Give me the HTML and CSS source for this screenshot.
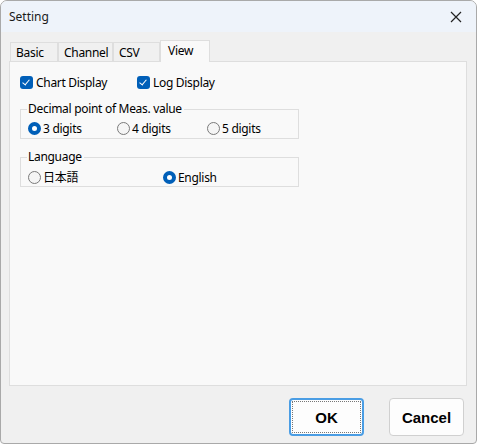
FILE: index.html
```html
<!DOCTYPE html>
<html lang="en">

<head>
    <meta charset="UTF-8">
    <title>Setting</title>
    <link rel="stylesheet" href="styles.css">
</head>

<body>
    <div class="window">
        <div class="titlebar">
            <span class="title">Setting</span>
            <svg class="close" width="12" height="12" viewBox="0 0 12 12">
                <path d="M1 1L11 11M11 1L1 11" stroke="#222" stroke-width="1.2" fill="none" />
            </svg>
        </div>

        <div class="content">
            <div class="tabs">
                <div class="tab tab-basic">Basic</div>
                <div class="tab tab-channel">Channel</div>
                <div class="tab tab-csv">CSV</div>
                <div class="tab active">View</div>
            </div>

            <div class="panel">
                <div class="checks">
                    <label class="check check-chart"><span class="box"></span>Chart Display</label>
                    <label class="check"><span class="box"></span>Log Display</label>
                </div>

                <div class="group">
                    <div class="legend">Decimal point of Meas. value</div>
                    <div class="options">
                        <label class="radio w-89"><span class="dot on"></span>3 digits</label>
                        <label class="radio w-90"><span class="dot"></span>4 digits</label>
                        <label class="radio"><span class="dot"></span>5 digits</label>
                    </div>
                </div>

                <div class="group">
                    <div class="legend">Language</div>
                    <div class="options">
                        <label class="radio w-135"><span class="dot"></span>日本語</label>
                        <label class="radio"><span class="dot on"></span>English</label>
                    </div>
                </div>
            </div>

            <div class="buttons">
                <button class="btn default">OK</button>
                <button class="btn">Cancel</button>
            </div>
        </div>
    </div>
</body>

</html>
```

FILE: styles.css
```css
body {
    margin: 0;
    background: #ffffff;
    font-family: "Noto Sans", "Noto Sans CJK JP", sans-serif;
    font-size: 12px;
    letter-spacing: -0.3px;
    color: #000;
}

.window {
    width: 477px;
    height: 444px;
    box-sizing: border-box;
    border: 1px solid #a9a9a9;
    border-radius: 7px 7px 4px 4px;
    background: #f0f0f0;
    display: flex;
    flex-direction: column;
    overflow: hidden;
}

.titlebar {
    height: 31px;
    flex: none;
    background: #eef3fa;
    display: flex;
    align-items: center;
    justify-content: space-between;
    padding: 0 14px 0 8px;
}

.title {
    font-size: 12px;
    letter-spacing: 0;
    color: #1a1a1a;
}

.content {
    flex: 1;
    display: flex;
    flex-direction: column;
    padding: 8px 9px 0 8px;
}

/* tabs */
.tabs {
    display: flex;
    align-items: flex-end;
    height: 21px;
    padding-left: 1px;
}

.tab {
    height: 19px;
    line-height: 20px;
    background: #f0f0f0;
    border: 1px solid #dedede;
    border-bottom: none;
    padding-left: 5px;
    box-sizing: border-box;
}

.tab-basic {
    width: 48px;
}

.tab-channel {
    width: 55px;
}

.tab-csv {
    width: 47px;
}

.tab.active {
    width: 50px;
    height: 22px;
    line-height: 20px;
    background: #f9f9f9;
    padding-left: 7px;
    position: relative;
    z-index: 1;
    margin-bottom: -1px;
}

.panel {
    height: 325px;
    box-sizing: border-box;
    background: #f9f9f9;
    border: 1px solid #dedede;
    padding: 13px 0 0 10px;
}

/* checkboxes */
.checks {
    display: flex;
    align-items: center;
    height: 14px;
}

.check {
    display: flex;
    align-items: center;
    gap: 3px;
}

.check-chart {
    width: 117px;
}

.box {
    width: 13px;
    height: 13px;
    border-radius: 3px;
    background: #005fb8;
    position: relative;
}

.box::after {
    content: "";
    position: absolute;
    left: 4px;
    top: 2px;
    width: 3px;
    height: 6px;
    border: solid #fff;
    border-width: 0 1px 1px 0;
    transform: rotate(40deg);
}

/* group boxes */
.group {
    width: 279px;
    height: 30px;
    box-sizing: border-box;
    border: 1px solid #dedede;
    margin-top: 20px;
    position: relative;
    padding: 10px 0 0 7px;
}

.group + .group {
    margin-top: 18px;
}

.legend {
    position: absolute;
    top: -9px;
    left: 6px;
    background: #f9f9f9;
    padding: 0 2px 0 1px;
    line-height: 16px;
}

.options {
    display: flex;
    align-items: center;
}

.radio {
    display: flex;
    align-items: center;
    gap: 2px;
}

.w-89 {
    width: 89px;
}

.w-90 {
    width: 90px;
}

.w-135 {
    width: 135px;
}

.dot {
    width: 13px;
    height: 13px;
    box-sizing: border-box;
    border-radius: 50%;
    border: 1px solid #7a7a7a;
    background: #f5f5f5;
}

.dot.on {
    border: 4px solid #005fb8;
    background: #fff;
}

/* buttons */
.buttons {
    display: flex;
    justify-content: flex-end;
    gap: 25px;
    padding: 12px 3px 0 0;
}

.btn {
    width: 75px;
    height: 38px;
    border: 1px solid #d0d0d0;
    border-radius: 4px;
    background: #fdfdfd;
    font-family: "Liberation Sans", Arial, sans-serif;
    font-weight: bold;
    font-size: 15px;
    letter-spacing: 0;
    color: #000;
}

.btn.default {
    border: 2px solid #4a9de4;
    outline: 1px dotted #777;
    outline-offset: -4px;
}
```
